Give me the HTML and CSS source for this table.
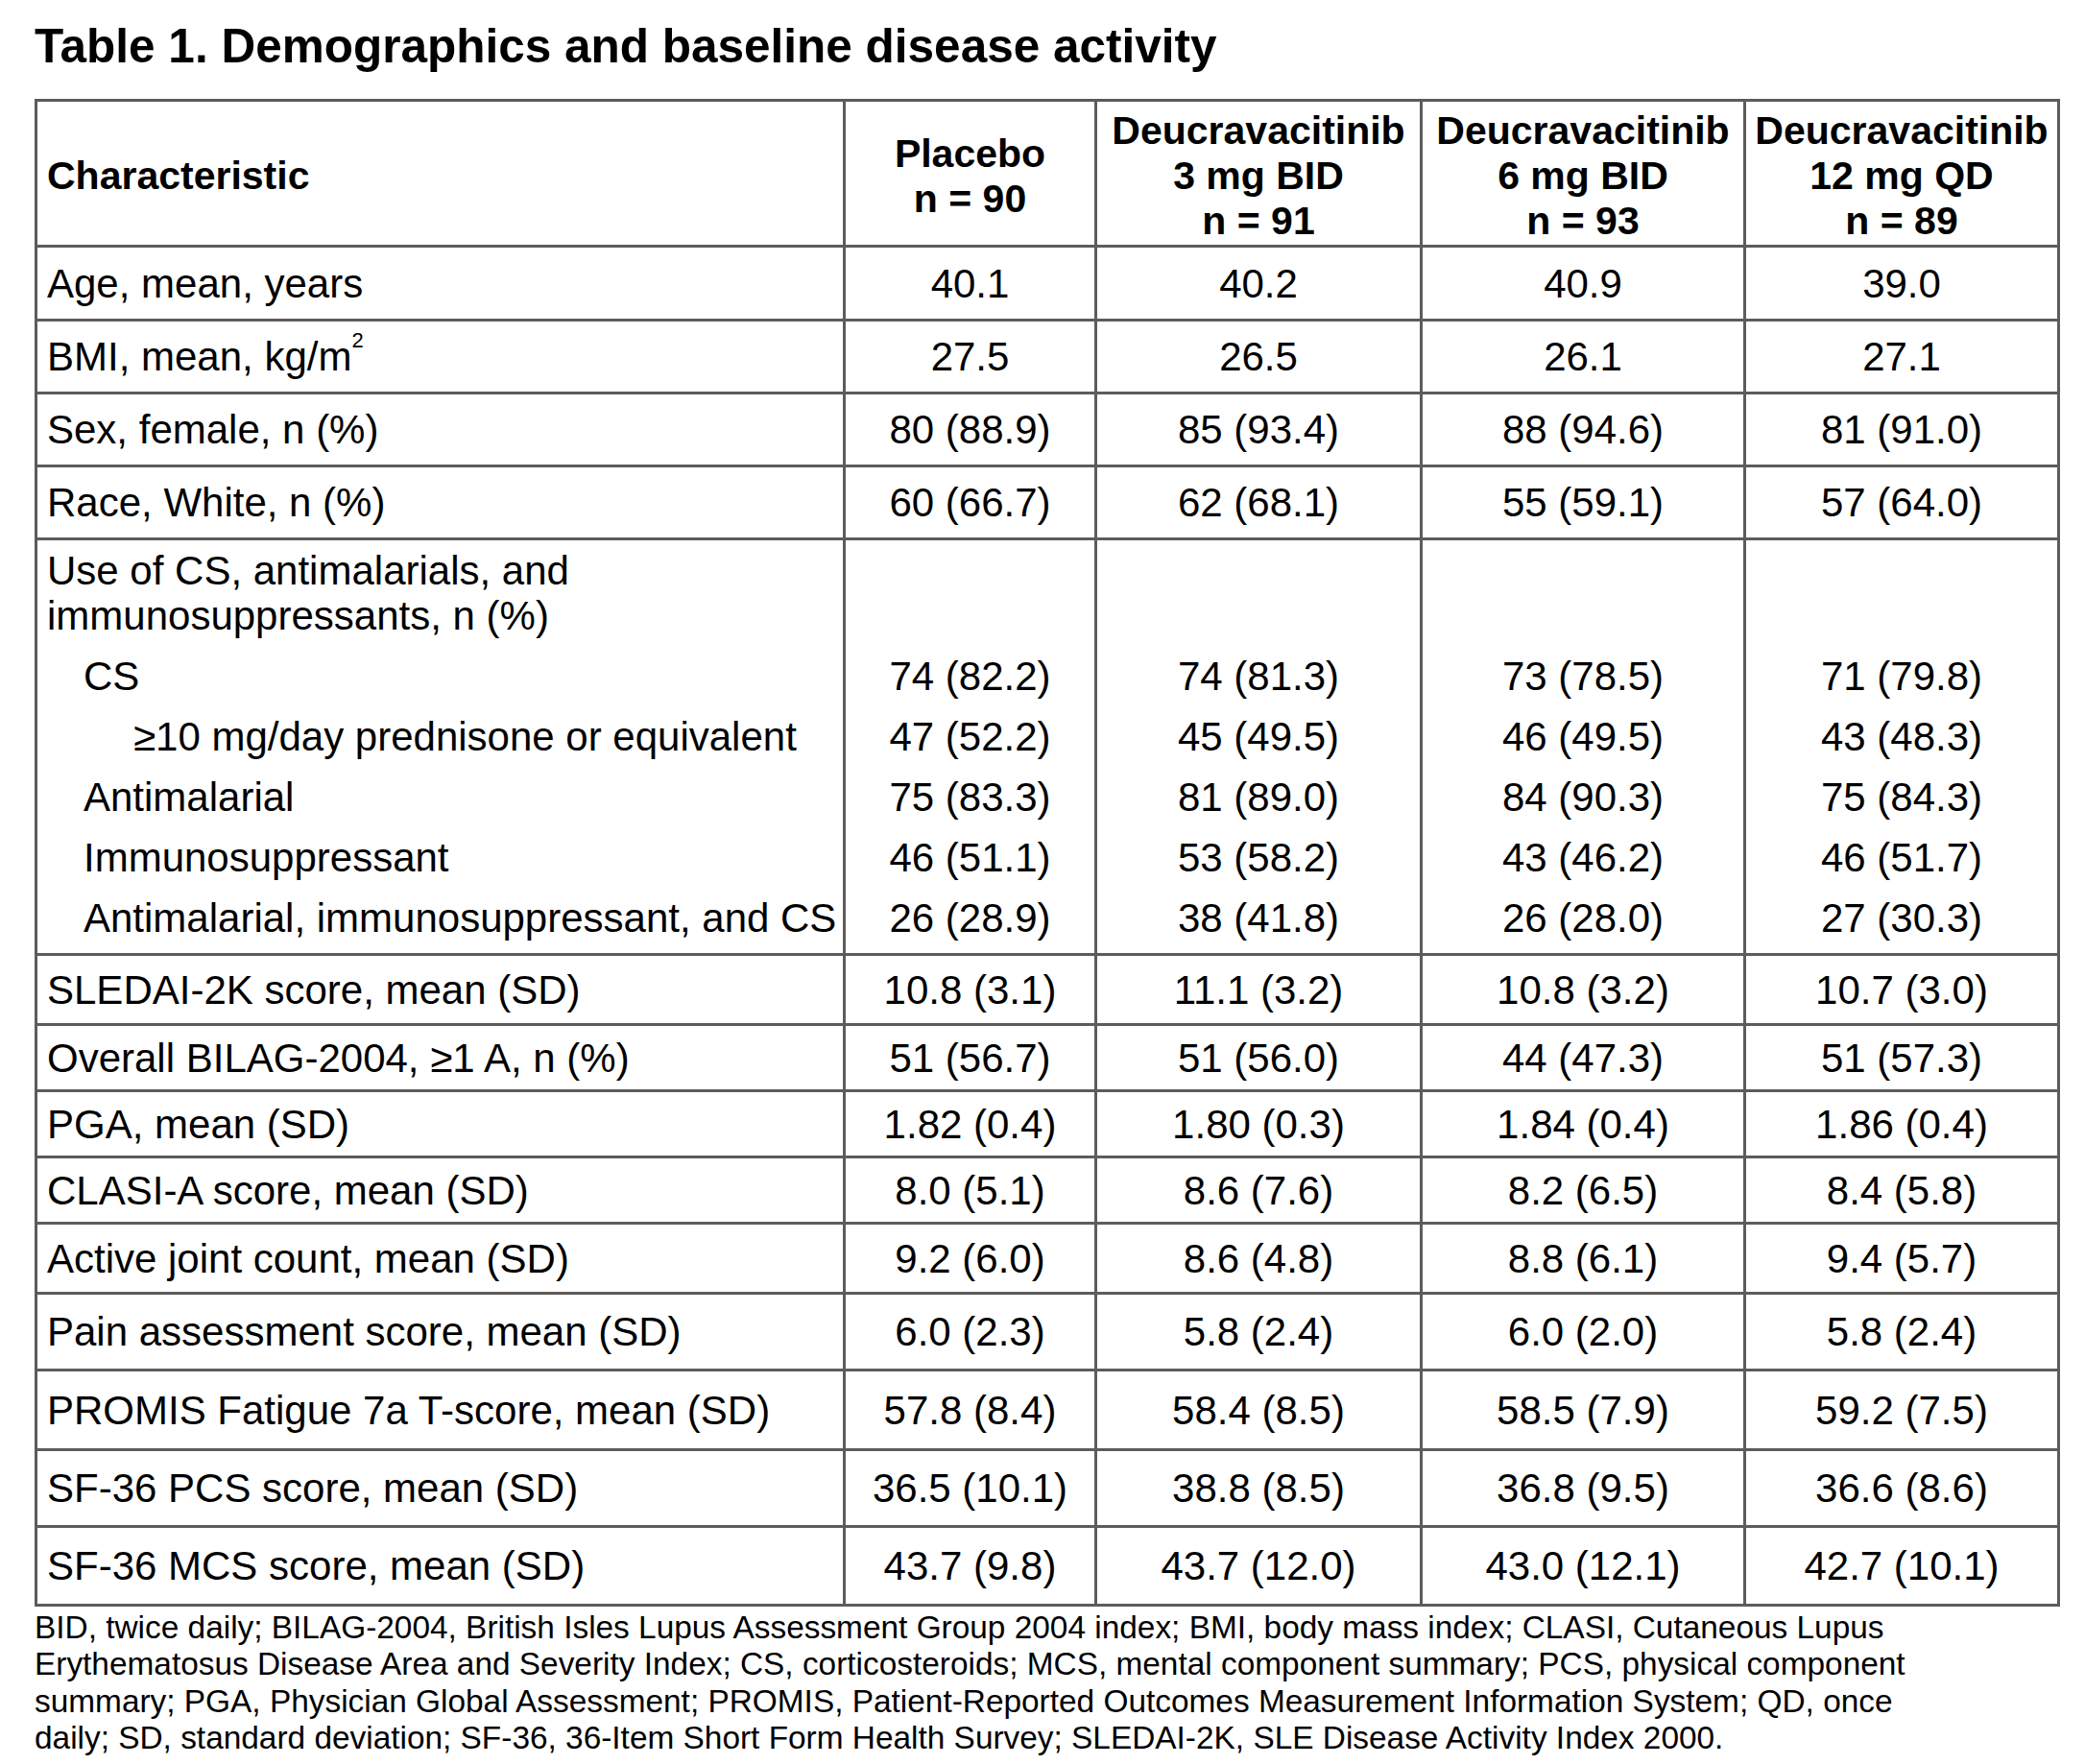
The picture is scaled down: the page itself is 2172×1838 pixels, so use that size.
FILE: index.html
```html
<!DOCTYPE html>
<html lang="en">
<head>
<meta charset="utf-8">
<title>Table 1. Demographics and baseline disease activity</title>
<link rel="stylesheet" href="styles.css">
</head>
<body>
<div class="page">
  <h1 class="title">Table 1. Demographics and baseline disease activity</h1>
  <table class="data">
    <colgroup>
      <col class="c-char">
      <col class="c-plac">
      <col class="c-d3">
      <col class="c-d6">
      <col class="c-d12">
    </colgroup>
    <thead>
      <tr class="h-head">
        <th class="lab">Characteristic</th>
        <th>Placebo<br>n = 90</th>
        <th>Deucravacitinib<br>3 mg BID<br>n = 91</th>
        <th>Deucravacitinib<br>6 mg BID<br>n = 93</th>
        <th>Deucravacitinib<br>12 mg QD<br>n = 89</th>
      </tr>
    </thead>
    <tbody>
      <tr class="h77"><td class="lab">Age, mean, years</td><td>40.1</td><td>40.2</td><td>40.9</td><td>39.0</td></tr>
      <tr class="h76"><td class="lab">BMI, mean, kg/m<sup>2</sup></td><td>27.5</td><td>26.5</td><td>26.1</td><td>27.1</td></tr>
      <tr class="h76"><td class="lab">Sex, female, n (%)</td><td>80 (88.9)</td><td>85 (93.4)</td><td>88 (94.6)</td><td>81 (91.0)</td></tr>
      <tr class="h76"><td class="lab">Race, White, n (%)</td><td>60 (66.7)</td><td>62 (68.1)</td><td>55 (59.1)</td><td>57 (64.0)</td></tr>
      <tr class="grp grp-head"><td class="lab">Use of CS, antimalarials, and<br>immunosuppressants, n (%)</td><td></td><td></td><td></td><td></td></tr>
      <tr class="grp grp-sub"><td class="lab ind1">CS</td><td>74 (82.2)</td><td>74 (81.3)</td><td>73 (78.5)</td><td>71 (79.8)</td></tr>
      <tr class="grp grp-sub"><td class="lab ind2">≥10 mg/day prednisone or equivalent</td><td>47 (52.2)</td><td>45 (49.5)</td><td>46 (49.5)</td><td>43 (48.3)</td></tr>
      <tr class="grp grp-sub"><td class="lab ind1">Antimalarial</td><td>75 (83.3)</td><td>81 (89.0)</td><td>84 (90.3)</td><td>75 (84.3)</td></tr>
      <tr class="grp grp-sub"><td class="lab ind1">Immunosuppressant</td><td>46 (51.1)</td><td>53 (58.2)</td><td>43 (46.2)</td><td>46 (51.7)</td></tr>
      <tr class="grp-last"><td class="lab ind1">Antimalarial, immunosuppressant, and CS</td><td>26 (28.9)</td><td>38 (41.8)</td><td>26 (28.0)</td><td>27 (30.3)</td></tr>
      <tr class="h73"><td class="lab">SLEDAI-2K score, mean (SD)</td><td>10.8 (3.1)</td><td>11.1 (3.2)</td><td>10.8 (3.2)</td><td>10.7 (3.0)</td></tr>
      <tr class="h69"><td class="lab">Overall BILAG-2004, ≥1 A, n (%)</td><td>51 (56.7)</td><td>51 (56.0)</td><td>44 (47.3)</td><td>51 (57.3)</td></tr>
      <tr class="h69"><td class="lab">PGA, mean (SD)</td><td>1.82 (0.4)</td><td>1.80 (0.3)</td><td>1.84 (0.4)</td><td>1.86 (0.4)</td></tr>
      <tr class="h69"><td class="lab">CLASI-A score, mean (SD)</td><td>8.0 (5.1)</td><td>8.6 (7.6)</td><td>8.2 (6.5)</td><td>8.4 (5.8)</td></tr>
      <tr class="h72"><td class="lab">Active joint count, mean (SD)</td><td>9.2 (6.0)</td><td>8.6 (4.8)</td><td>8.8 (6.1)</td><td>9.4 (5.7)</td></tr>
      <tr class="h80"><td class="lab">Pain assessment score, mean (SD)</td><td>6.0 (2.3)</td><td>5.8 (2.4)</td><td>6.0 (2.0)</td><td>5.8 (2.4)</td></tr>
      <tr class="h83"><td class="lab">PROMIS Fatigue 7a T-score, mean (SD)</td><td>57.8 (8.4)</td><td>58.4 (8.5)</td><td>58.5 (7.9)</td><td>59.2 (7.5)</td></tr>
      <tr class="h80"><td class="lab">SF-36 PCS score, mean (SD)</td><td>36.5 (10.1)</td><td>38.8 (8.5)</td><td>36.8 (9.5)</td><td>36.6 (8.6)</td></tr>
      <tr class="h82"><td class="lab">SF-36 MCS score, mean (SD)</td><td>43.7 (9.8)</td><td>43.7 (12.0)</td><td>43.0 (12.1)</td><td>42.7 (10.1)</td></tr>
    </tbody>
  </table>
  <p class="note">BID, twice daily; BILAG-2004, British Isles Lupus Assessment Group 2004 index; BMI, body mass index; CLASI, Cutaneous Lupus<br>Erythematosus Disease Area and Severity Index; CS, corticosteroids; MCS, mental component summary; PCS, physical component<br>summary; PGA, Physician Global Assessment; PROMIS, Patient-Reported Outcomes Measurement Information System; QD, once<br>daily; SD, standard deviation; SF-36, 36-Item Short Form Health Survey; SLEDAI-2K, SLE Disease Activity Index 2000.</p>
</div>
</body>
</html>
```

FILE: styles.css
```css
html, body {
  margin: 0;
  padding: 0;
  background: #ffffff;
}

.page {
  padding: 20px 0 0 36px;
  font-family: "Liberation Sans", Arial, Helvetica, sans-serif;
  color: #000000;
}

.title {
  margin: 0 0 27px 0;
  font-size: 49.5px;
  font-weight: bold;
  line-height: 56px;
}

.data {
  border-collapse: collapse;
  table-layout: fixed;
  width: 2107px;
  font-size: 42px;
  line-height: 47px;
}

.c-char { width: 842px; }
.c-plac { width: 262px; }
.c-d3 { width: 339px; }
.c-d6 { width: 337px; }
.c-d12 { width: 327px; }

.data th,
.data td {
  border: 3px solid #5f5b5b;
  padding: 0 6px;
  text-align: center;
  vertical-align: middle;
  white-space: nowrap;
}

.data th {
  font-weight: bold;
  font-size: 41px;
}

.h-head th {
  height: 143px;
  padding-top: 6px;
}

.data .lab {
  text-align: left;
  padding-left: 10px;
}

.data .ind1 { padding-left: 48px; }
.data .ind2 { padding-left: 100px; }

.data sup {
  font-size: 22px;
  line-height: 0;
  vertical-align: 24px;
}

.h82 td { height: 79px; }
.h83 td { height: 80px; }
.h80 td { height: 77px; }
.h77 td { height: 74px; }
.h76 td { height: 73px; }
.h73 td { height: 70px; }
.h72 td { height: 70px; }
.h69 td { height: 66px; }

.grp td { border-bottom-style: hidden; }
.grp-head td { height: 110px; }
.grp-sub td { height: 63px; }
.grp-last td {
  height: 62px;
  padding-bottom: 6px;
}

.note {
  margin: 3px 0 0 0;
  font-size: 33.4px;
  line-height: 38.3px;
}
```
